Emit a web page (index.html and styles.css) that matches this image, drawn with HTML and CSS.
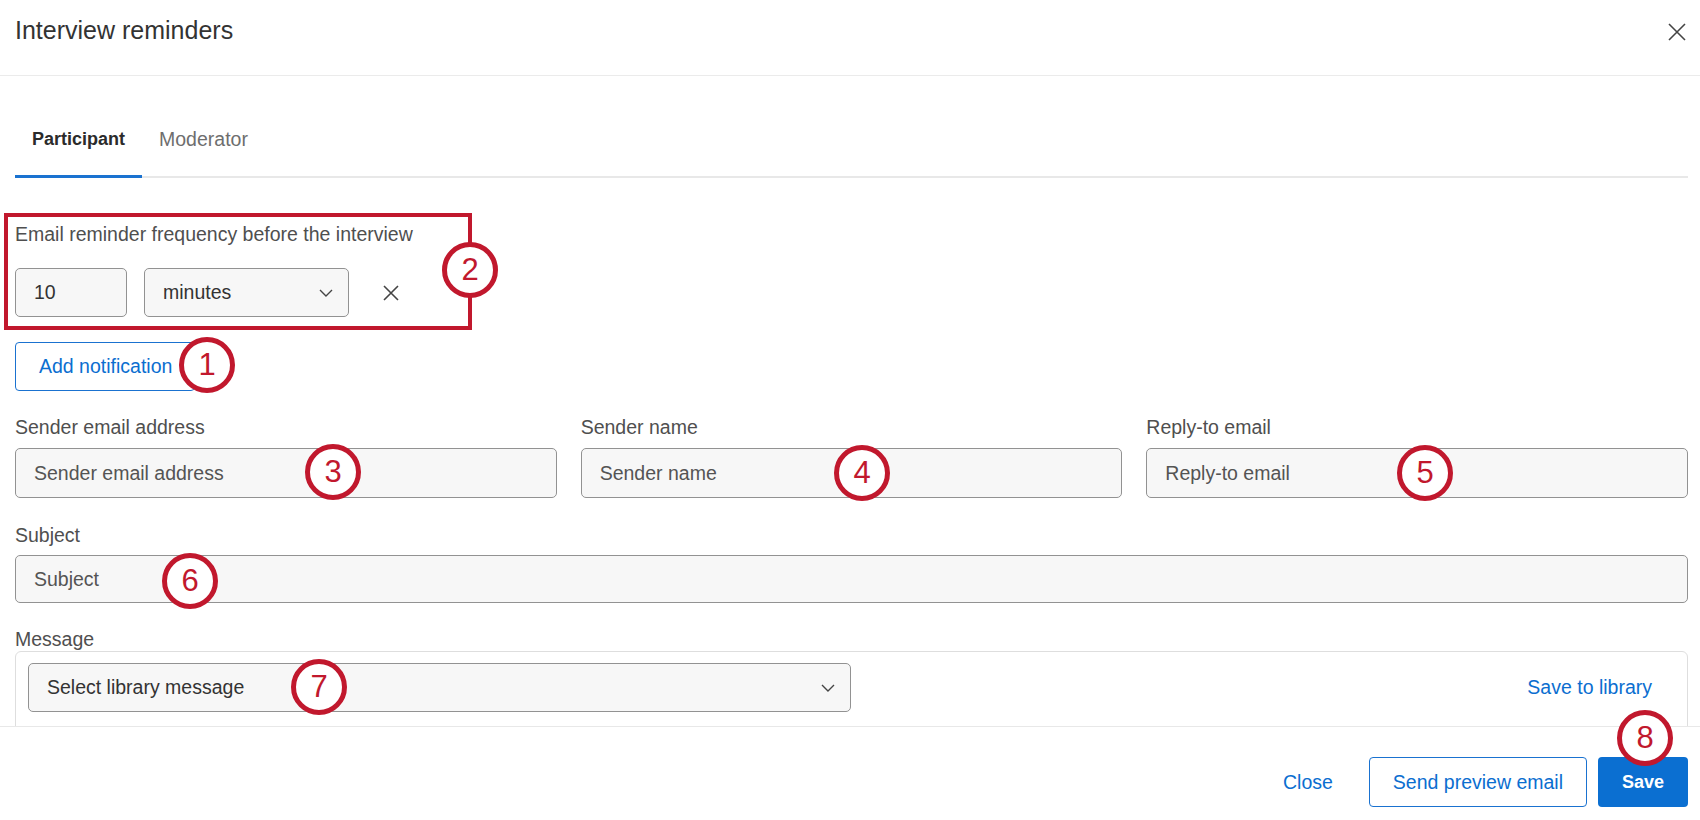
FILE: index.html
```html
<!DOCTYPE html>
<html lang="en">
<head>
    <meta charset="UTF-8">
    <meta name="viewport" content="width=device-width, initial-scale=1.0">
    <title>Interview reminders</title>
    <link rel="stylesheet" href="styles.css">
</head>
<body>
    <div class="dialog">
        <header class="dialog-header">
            <h1 class="dialog-title">Interview reminders</h1>
            <button class="icon-btn close-x" aria-label="Close">
                <svg width="20" height="20" viewBox="0 0 20 20"><path d="M2 2L18 18M18 2L2 18" stroke="#444" stroke-width="1.6" fill="none"/></svg>
            </button>
        </header>

        <main class="dialog-body">
            <div class="tabs">
                <div class="tab active">Participant</div>
                <div class="tab">Moderator</div>
            </div>

            <div class="frequency">
                <label class="field-label" for="amount">Email reminder frequency before the interview</label>
                <div class="frequency-row">
                    <input id="amount" class="box amount" type="text" value="10">
                    <div class="box select unit">
                        <span>minutes</span>
                        <svg width="14" height="8" viewBox="0 0 14 8"><path d="M1 1L7 7L13 1" stroke="#444" stroke-width="1.4" fill="none"/></svg>
                    </div>
                    <button class="icon-btn remove" aria-label="Remove">
                        <svg width="18" height="18" viewBox="0 0 18 18"><path d="M2 2L16 16M16 2L2 16" stroke="#444" stroke-width="1.6" fill="none"/></svg>
                    </button>
                </div>
            </div>

            <button class="btn btn-outline add-btn">Add notification</button>

            <div class="sender-grid">
                <div class="field">
                    <label class="field-label" for="sender-email">Sender email address</label>
                    <input id="sender-email" class="box" type="text" placeholder="Sender email address">
                </div>
                <div class="field">
                    <label class="field-label" for="sender-name">Sender name</label>
                    <input id="sender-name" class="box" type="text" placeholder="Sender name">
                </div>
                <div class="field">
                    <label class="field-label" for="reply-to">Reply-to email</label>
                    <input id="reply-to" class="box" type="text" placeholder="Reply-to email">
                </div>
            </div>

            <div class="field subject-field">
                <label class="field-label" for="subject">Subject</label>
                <input id="subject" class="box subject" type="text" placeholder="Subject">
            </div>

            <div class="field message-field">
                <label class="field-label">Message</label>
                <div class="message-box">
                    <div class="message-toolbar">
                        <div class="box select library">
                            <span>Select library message</span>
                            <svg width="14" height="8" viewBox="0 0 14 8"><path d="M1 1L7 7L13 1" stroke="#444" stroke-width="1.4" fill="none"/></svg>
                        </div>
                        <a class="link" href="#">Save to library</a>
                    </div>
                    <div class="editor"></div>
                </div>
            </div>
        </main>

        <footer class="dialog-footer">
            <button class="btn btn-link">Close</button>
            <button class="btn btn-outline">Send preview email</button>
            <button class="btn btn-primary">Save</button>
        </footer>

        <span class="marker m1">1</span>
        <span class="marker m2">2</span>
        <span class="marker m3">3</span>
        <span class="marker m4">4</span>
        <span class="marker m5">5</span>
        <span class="marker m6">6</span>
        <span class="marker m7">7</span>
        <span class="marker m8">8</span>
    </div>
</body>
</html>
```

FILE: styles.css
```css
* {
    box-sizing: border-box;
}

body {
    margin: 0;
    background: #fff;
    font-family: "Liberation Sans", Arial, sans-serif;
    color: #333;
}

.dialog {
    position: relative;
    width: 1700px;
    height: 820px;
    display: flex;
    flex-direction: column;
    overflow: hidden;
}

.dialog-header {
    height: 76px;
    flex-shrink: 0;
    display: flex;
    justify-content: space-between;
    align-items: flex-start;
    padding: 16px 13px 0 15px;
    border-bottom: 1px solid #ebebeb;
}

.dialog-title {
    margin: 0;
    font-size: 25px;
    font-weight: normal;
    color: #333;
}

.icon-btn {
    background: none;
    border: none;
    padding: 0;
    display: flex;
}

.close-x {
    margin-top: 6px;
}

.dialog-body {
    flex: 1;
    overflow: hidden;
    padding: 0 12px 0 15px;
}

/* tabs */
.tabs {
    margin-top: 40px;
    display: flex;
    border-bottom: 2px solid #e8e8e8;
}

.tab {
    padding: 12px 17px 25px;
    font-size: 19.5px;
    line-height: 22px;
    color: #6e6e6e;
    border-bottom: 3px solid transparent;
    margin-bottom: -2px;
}

.tab.active {
    font-size: 18px;
    color: #2b2b2b;
    font-weight: bold;
    border-bottom-color: #1a72d0;
}

/* fields */
.field-label {
    display: block;
    font-size: 19.5px;
    line-height: 22px;
    color: #4f4f4f;
}

.box {
    height: 50px;
    border: 1px solid #929292;
    border-radius: 5px;
    background: #f7f7f7;
    padding: 0 18px;
    font-family: inherit;
    font-size: 19.5px;
    color: #333;
    width: 100%;
}

.box::placeholder {
    color: #545454;
}

.select {
    display: flex;
    align-items: center;
    justify-content: space-between;
    padding-right: 15px;
}

/* annotated frequency block */
.frequency {
    margin-top: 35px;
    margin-left: -11px;
    width: 468px;
    border: 4px solid #c1182d;
    padding: 6px 7px 9px;
}

.frequency-row {
    margin-top: 23px;
    display: flex;
    align-items: center;
}

.frequency-row .box {
    height: 49px;
}

.amount {
    width: 112px;
}

.unit {
    width: 205px;
    margin-left: 17px;
}

.remove {
    margin-left: 33px;
}

/* buttons */
.btn {
    height: 50px;
    border-radius: 4px;
    font-family: inherit;
    font-size: 19.5px;
    padding: 0 23px;
    background: #fff;
    cursor: pointer;
}

.btn-outline {
    border: 1px solid #1a72d0;
    color: #0b6ed0;
}

.btn-link {
    border: none;
    background: none;
    color: #0b6ed0;
    padding: 0 18px;
    margin-right: 7px;
}

.btn-primary {
    border: none;
    background: #0b6fd1;
    color: #fff;
    font-size: 18px;
    font-weight: bold;
    width: 90px;
    padding: 0;
}

.add-btn {
    margin-top: 12px;
    height: 49px;
    padding: 0 22px 0 23px;
}

.sender-grid {
    margin-top: 25px;
    display: grid;
    grid-template-columns: 1fr 1fr 1fr;
    gap: 24px;
}

.sender-grid .field-label {
    margin-bottom: 10px;
}

.subject-field {
    margin-top: 26px;
}

.subject-field .field-label {
    margin-bottom: 9px;
}

.subject {
    height: 48px;
}

.message-field {
    margin-top: 25px;
}

.message-field .field-label {
    margin-bottom: 1px;
}

.message-box {
    border: 1px solid #dedede;
    border-radius: 6px;
    padding: 11px 35px 0 12px;
    height: 200px;
}

.message-toolbar {
    display: flex;
    align-items: center;
    justify-content: space-between;
}

.library {
    width: 823px;
    height: 49px;
}

.link {
    color: #0b6ed0;
    font-size: 19.5px;
    text-decoration: none;
}

/* footer */
.dialog-footer {
    height: 94px;
    flex-shrink: 0;
    border-top: 1px solid #e8e8e8;
    display: flex;
    justify-content: flex-end;
    align-items: flex-start;
    gap: 11px;
    padding: 30px 12px 0;
    background: #fff;
}

/* numbered annotation markers */
.marker {
    position: absolute;
    width: 56px;
    height: 56px;
    border: 5px solid #c1182d;
    border-radius: 50%;
    background: #fff;
    color: #c1182d;
    font-size: 31px;
    line-height: 46px;
    text-align: center;
}

.m1 { left: 179px; top: 337px; }
.m2 { left: 442px; top: 242px; }
.m3 { left: 305px; top: 444px; }
.m4 { left: 834px; top: 445px; }
.m5 { left: 1397px; top: 445px; }
.m6 { left: 162px; top: 553px; }
.m7 { left: 291px; top: 659px; }
.m8 { left: 1617px; top: 710px; }
```
